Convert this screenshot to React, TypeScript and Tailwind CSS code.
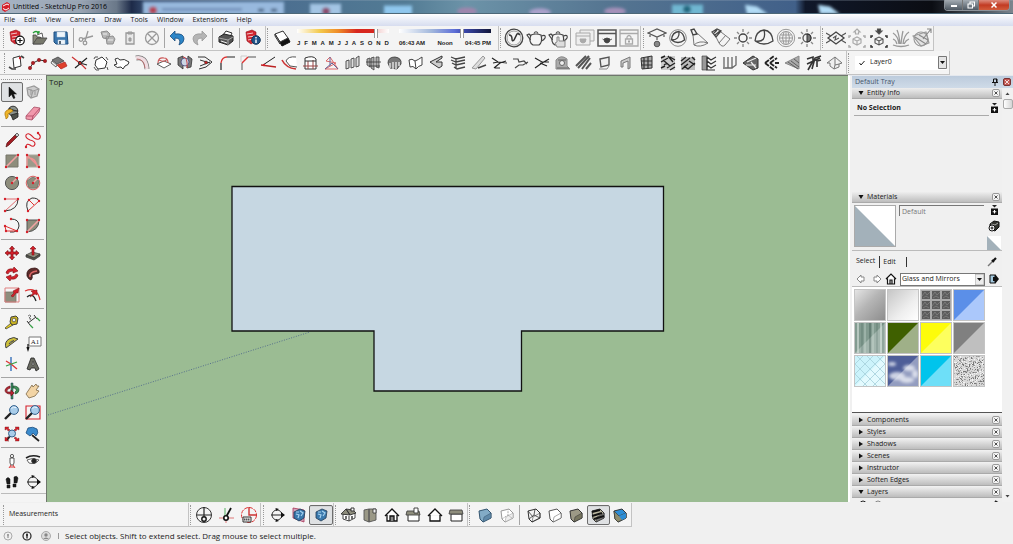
import type { ReactNode } from "react";

type Tool = { label: string; icon: ReactNode; pressed?: boolean };

function tool(label: string, icon: ReactNode, pressed = false): Tool {
  return { label, icon, pressed };
}

function Svg({ children }: { children: ReactNode }) {
  return (
    <svg viewBox="0 0 20 20" className="h-5 w-5 shrink-0" fill="none" stroke="#333" strokeWidth="1" aria-hidden="true">
      {children}
    </svg>
  );
}

function ToolButton({ item }: { item: Tool }) {
  return (
    <button
      type="button"
      aria-label={item.label}
      aria-pressed={item.pressed}
      className={
        item.pressed
          ? "flex h-5 min-w-0 flex-1 items-center justify-center rounded-xs border border-[#6d6d6d] bg-[#dfe1e3] inset-shadow-2xs"
          : "flex h-5 min-w-0 flex-1 items-center justify-center"
      }
    >
      {item.icon}
    </button>
  );
}

function Grip() {
  return <div className="mx-px h-5 w-0 shrink-0 border-l border-dotted border-[#999]" />;
}

function Sep() {
  return <div className="h-5 w-px shrink-0 bg-[#a5a5a5]" />;
}

function Group({ items, width }: { items: Tool[]; width: string }) {
  return (
    <div className={`flex shrink-0 items-center ${width}`}>
      {items.map((item) => (
        <ToolButton key={item.label} item={item} />
      ))}
    </div>
  );
}

/* ---------- shared glyphs ---------- */

const redBook = (
  <>
    <path d="M3 4 L9 2 L13 4 L13 13 L8 16 L4 13 Z" fill="#d22630" stroke="#8f1017" strokeWidth=".6" />
    <path d="M4 6 l6-1 M5 9 l7-1 M5 12 l5-1" stroke="#f3c4c6" strokeWidth="1" />
  </>
);

const magnifier = (
  <>
    <path d="M9 11 L3 17" stroke="#222" strokeWidth="2.4" />
    <circle cx="12" cy="8" r="4.4" fill="#a9cdea" stroke="#34618c" />
    <path d="M9.5 6.5 q2-2.5 4.5-.8" stroke="#eef7ff" />
  </>
);

const houseFront = (
  <path d="M3 11 L10 4 L17 11 M5 10 V16 H15 V10" stroke="#111" strokeWidth="1.3" fill="#fff" />
);

const pot = <path d="M7 10 q3-2 6 0 q0 4-3 4 q-3 0-3-4 M13 11 l2-1 M7 11 l-1.5-1" fill="#444" stroke="#444" strokeWidth=".8" />;

const teapot = (
  <>
    <path d="M5 7 Q2 14 7 17 H13 Q17 14 15 7 Q10 5 5 7 Z" stroke="#444" strokeWidth="1.2" />
    <path d="M4.5 12 L1 7 L3 6 L5 8 M15.5 8 Q20 6 19 10 Q18 12 15.5 13 M8 5.5 Q10 2 12 5.5" stroke="#444" strokeWidth="1.2" />
  </>
);

const prism = (fill: string, side: string, stroke = "#333") => (
  <>
    <path d="M4 6 L12 4 L16 8 L16 13 L8 17 L5 14 Z" fill={fill} stroke={stroke} />
    <path d="M8 17 L9 12 L16 8 V13 Z" fill={side} stroke={stroke} strokeWidth=".5" />
  </>
);

const sectionPlane = (
  <>
    <circle cx="10" cy="10" r="5" stroke="#333" />
    <path d="M4 10 H17" stroke="#222" />
    <path d="M14 7 L18 10 L14 13 Z M8.5 3 L12 4 L9 6 Z M8.5 17 L12 16 L9 14 Z" fill="#111" stroke="none" />
  </>
);

/* ---------- top toolbars ---------- */

const fileTools = [
  tool("New", <Svg>{redBook}<circle cx="13" cy="12.5" r="4.3" fill="#fff" stroke="#111" strokeWidth="1.2" /><path d="M13 10 V15 M10.5 12.5 H15.5" stroke="#111" strokeWidth="1.2" /></Svg>),
  tool("Open", <Svg><path d="M4 7 V16 H12 V9 H8 L7 7 Z" fill="#8b8b7b" stroke="#444" strokeWidth=".8" /><path d="M8 7 L13 5 L14 10" fill="#fff" strokeWidth=".8" /><path d="M4 16 L8 10 H18 L14 16 Z" fill="#77786c" stroke="#444" strokeWidth=".8" /><path d="M4 5 q3-3 6 0 M10 5 l-2 0 M10 5 V3" stroke="#249c34" strokeWidth="1.3" /></Svg>),
  tool("Save", <Svg><path d="M3 4 H16 L17 16 H5 L3 14 Z" fill="#3a76ad" stroke="#1e4f80" /><path d="M6 4 H14 V9 H6 Z M7 12 H14 V16 H7 Z" fill="#eef5fb" stroke="#bfd0df" strokeWidth=".5" /><path d="M9 13 v3" stroke="#234" strokeWidth="1.5" /></Svg>),
];

const editTools = [
  tool("Cut", <Svg><g stroke="#9a9a9a" strokeWidth="1.3"><path d="M12 3 L9 13 M17 8 L6 11" /><circle cx="5" cy="11.5" r="1.8" /><circle cx="9" cy="15" r="1.8" /></g></Svg>),
  tool("Copy", <Svg><path d="M3 4 L9 3 L12 6 L10 11 L5 10 Z M8 9 L15 8 L17 11 L15 16 L9 16 Z" fill="#b7b7b7" stroke="#8e8e8e" /><path d="M5 6 h4 M10 12 h5" stroke="#eee" /></Svg>),
  tool("Paste", <Svg><path d="M6 5 H14 V16 H6 Z" fill="#e8e8e8" stroke="#999" strokeWidth="1.3" /><path d="M8 4 H12 V6 H8 Z M9 10 h2 v3 h-2 Z" fill="#aaa" stroke="#999" /></Svg>),
  tool("Erase", <Svg><circle cx="10" cy="10" r="6.5" stroke="#999" strokeWidth="1.3" /><path d="M5.5 5.5 L14.5 14.5 M14.5 5.5 L5.5 14.5" stroke="#999" strokeWidth="1.3" /></Svg>),
];

const undoTools = [
  tool("Undo", <Svg><path d="M3 8 L8 3 V6 Q17 5 17 11 Q17 15 12 17 Q15 10 8 10 V13 Z" fill="#2d86c8" stroke="#1c4d7c" strokeWidth=".8" /></Svg>),
  tool("Redo", <Svg><path d="M17 8 L12 3 V6 Q3 5 3 11 Q3 15 8 17 Q5 10 12 10 V13 Z" fill="#b5b5b5" stroke="#999" strokeWidth=".8" /></Svg>),
];

const printTools = [
  tool("Print", <Svg><path d="M7 7 L10 3 L16 5 L14 9 Z" fill="#fff" /><path d="M3 9 L8 6 L17 8 V13 L12 17 L3 14 Z" fill="#555" stroke="#222" /><path d="M3 10 L12 12 L17 9 M12 12 V17" stroke="#bbb" strokeWidth=".8" /><path d="M5 13 l6 2" stroke="#eee" /></Svg>),
];

const infoTools = [
  tool("Model Info", <Svg>{redBook}<circle cx="13" cy="12" r="4.3" fill="#20548a" stroke="#113355" /><path d="M13 11.5 V15 M13 9 V10.5" stroke="#fff" strokeWidth="1.4" /></Svg>),
];

const shadowTools = [
  tool("Show Shadows", <Svg><path d="M7 13 L16 10 L18 14 L10 18 Z" fill="#111" stroke="#111" /><path d="M3 6 L11 3 L16 10 L8 14 Z" fill="#fff" /><path d="M3 6 L8 14 L8 16 L3 8 Z" fill="#ccc" /></Svg>),
];

const renderTools = [
  tool("Asset Editor", <Svg><circle cx="10" cy="10" r="8.8" stroke="#444" strokeWidth="1.3" /><circle cx="10" cy="10" r="7" stroke="#888" strokeWidth=".8" /><path d="M5 7 Q8 7 8 11 Q8 14 10 12 L13 6 Q14 5 16 7" strokeWidth="1.5" /></Svg>),
  tool("Render", <Svg>{teapot}</Svg>),
  tool("Interactive Render", <Svg>{teapot}<path d="M9 19 L7 15 L9 14 V9 h2 v4 h6 v6 Z" fill="#ddd" stroke="#888" /></Svg>),
];

const frameTools = [
  tool("Batch Render", <Svg><g stroke="#aaa"><path d="M5 2 H19 V13 H5 Z" fill="#eee" /><path d="M1 5 H15 V17 H1 Z M1 8 H15" fill="#eee" /><path d="M5 11 h6 q0 4-3 4 q-3 0-3-4" fill="#aaa" /></g></Svg>),
  tool("Frame Buffer", <Svg><g strokeWidth="1.5" stroke="#555"><path d="M1 2 H19 V18 H1 Z M1 5.5 H19" /></g><g transform="translate(0 1)">{pot}</g></Svg>),
  tool("Lock Camera", <Svg><g stroke="#aaa" strokeWidth="1.3"><path d="M1 2 H19 V18 H1 Z M1 5.5 H19 M6.5 11 H13.5 V16 H6.5 Z M8 11 V9 Q10 6 12 9 V11" /></g><path d="M10 12.5 v2" stroke="#888" strokeWidth="1.5" /></Svg>),
];

const lightTools = [
  tool("Plane Light", <Svg><path d="M1 5 L10 1 L19 5 L10 9 Z M3 5 v4 M17 5 v4 M10 9 v3" strokeWidth="1.2" stroke="#555" /><circle cx="10" cy="16" r="2.8" fill="#888" stroke="#555" /></Svg>),
  tool("Sphere Light", <Svg><circle cx="10" cy="10" r="8.3" stroke="#888" /><path d="M3.5 12 Q4 4 11 3.5 Q16 5 16.5 12 Q10 17 3.5 12 M3.5 12 Q12 12 11 3.5" strokeWidth="1.3" stroke="#444" /></Svg>),
  tool("Spot Light", <Svg><path d="M1 2 l3-1 3 5 -4 1 Z" stroke="#444" strokeWidth="1.4" /><path d="M3 7 L4 17 Q10 20 18 15 L7 5 M4 17 Q9 12 18 15" stroke="#777" /></Svg>),
  tool("IES Light", <Svg><path d="M1 4 l5-3 4 2 -5 6 Z M3 5 l3-3 M4 7 l5-4" stroke="#444" strokeWidth="1.3" /><path d="M5 9 L8 15 Q11 20 14 17 L19 11 L10 4 M8 15 L15 7" stroke="#777" /></Svg>),
  tool("Omni Light", <Svg><circle cx="10" cy="10" r="4" stroke="#444" strokeWidth="1.4" /><path d="M10 1 V4 M10 16 V19 M1 10 H4 M16 10 H19 M4 4 L6 6 M14 14 L16 16 M16 4 L14 6 M4 16 L6 14" stroke="#888" strokeWidth="1.3" /></Svg>),
  tool("Dome Light", <Svg><path d="M1 13 Q2 3 10 2 Q18 3 19 13 Q10 19 1 13 M1 13 Q13 15 10 2" stroke="#444" strokeWidth="1.3" /></Svg>),
  tool("Globe", <Svg><g stroke="#999"><circle cx="10" cy="10" r="8.7" /><circle cx="10" cy="10" r="6.5" /><path d="M3.5 10 H16.5 M10 3 V17 M4.5 7 H15.5 M4.5 13 H15.5 M8 4 Q5 10 8 16 M12 4 Q15 10 12 16" /></g></Svg>),
  tool("Sun", <Svg><circle cx="10" cy="10" r="4" stroke="#555" strokeWidth="1.3" /><path d="M10 6 a4 4 0 0 1 0 8 Z" fill="#777" /><path d="M10 1 V4 M10 16 V19 M1 10 H4 M16 10 H19 M4 4 L6 6 M14 14 L16 16 M16 4 L14 6 M4 16 L6 14" stroke="#888" strokeWidth="1.3" /></Svg>),
];

const proxyTools = [
  tool("Infinite Plane", <Svg><path d="M2 10 L10 4 L18 10 L10 16 Z" stroke="#444" strokeWidth="1.3" /><path d="M0 5 L5 8 M20 5 L15 8 M0 15 L5 12 M20 15 L15 12 M7 10 L10 8 L9 12 L13 10" stroke="#555" strokeWidth="1.1" /></Svg>),
  tool("Export Proxy", <Svg><g stroke="#aaa" strokeWidth="1.2"><path d="M10 1 L13 4 H11.5 V6 H8.5 V4 H7 Z M6 11 L10 9 L14 11 V15 L10 17 L6 15 Z M6 11 L10 13 L14 11 M10 13 V17" /><path d="M2 10 V8 H4 M18 10 V8 H16 M2 17 V19 H4 M18 17 V19 H16" strokeWidth="1.5" /></g></Svg>),
  tool("Import Proxy", <Svg><g stroke="#555" strokeWidth="1.1"><path d="M10 6 L13 3 H11.5 V1 H8.5 V3 H7 Z" fill="#444" /><path d="M6 11 L10 9 L14 11 V15 L10 17 L6 15 Z M6 11 L10 13 L14 11 M10 13 V17" /><path d="M2 10 V8 H4 M18 10 V8 H16 M2 17 V19 H4 M18 17 V19 H16" stroke="#333" strokeWidth="1.5" /></g></Svg>),
  tool("Fur", <Svg><g stroke="#999" strokeWidth="1.3"><path d="M8 16 Q7 8 2 5 M9 16 Q8 6 6 2 M10 16 Q11 7 12 3 M12 16 Q13 7 18 4 M13 16 Q15 12 18 11 M6 16 Q5 12 2 11" /><path d="M2 17 Q10 20 18 17" /></g></Svg>),
  tool("Clipper", <Svg><g stroke="#999" strokeWidth="1.1"><path d="M1 8 L14 4 L17 15 L9 18 Z" fill="#e2e2e2" /><circle cx="9" cy="11" r="7" /><path d="M3 9 L14 16 M7 7 L16 12 M11 11 L19 1 M15 1 H19 V5" stroke="#888" /></g></Svg>),
];

const dots = (pts: number[][]) =>
  pts.map(([x, y]) => <circle key={`${x}-${y}`} cx={x} cy={y} r="1.2" fill="#d4202a" stroke="none" />);

const nodes = (pts: number[][]) =>
  pts.map(([x, y]) => <circle key={`${x}-${y}`} cx={x} cy={y} r="1.7" fill="#b01c22" stroke="#7a1015" strokeWidth=".5" />);

const shapeTools = [
  tool("Face From Lines", <Svg><path d="M6 5 L13 3 L14 13 L7 15 Z" fill="#fff" /><path d="M2 14 L5 16 H9 M14 3 L17 5" stroke="#444" strokeWidth="1.6" />{dots([[13, 5]])}</Svg>),
  tool("Bezier Nodes", <Svg><path d="M2 15 L5 10 L11 7 L18 8" stroke="#333" />{nodes([[2, 15], [5, 10], [11, 7], [17, 8]])}</Svg>),
  tool("Push Face", <Svg><path d="M3 7 L9 4 L15 8 L8 11 Z" fill="#777" strokeWidth=".7" /><path d="M3 8 L8 12 L7 14 L2 10 Z" fill="#eee" strokeWidth=".7" /><path d="M8 12 L16 9 L18 13 L12 16 Z" fill="#e0402b" stroke="#a22" strokeWidth=".7" /></Svg>),
  tool("Trim", <Svg><path d="M2 4 L11 11 L16 16" stroke="#c33" strokeWidth="1.2" /><path d="M5 15 L17 5 M10 10 L17 12" stroke="#222" strokeWidth="1.2" /><circle cx="10" cy="10" r="1.6" fill="#c22" /></Svg>),
  tool("Polyhedron", <Svg><path d="M5 7 L11 4 L16 9 L14 15 L7 16 L4 12 Z" fill="#fff" /><path d="M3 6 L4 4 L7 4 M15 4 L17 7 M3 14 L5 17 H8 M16 14 L17 17" stroke="#555" /></Svg>),
  tool("Surface Patch", <Svg><path d="M3 6 Q6 4 8 7 Q12 5 17 9 Q17 12 13 13 L11 16 L9 14 Q5 16 2 12 L5 11 Z" fill="#fff" stroke="#333" /></Svg>),
  tool("Pipe Along Path", <Svg><path d="M3 5 Q13 3 14 16" stroke="#777" strokeWidth="5" /><path d="M3 5 Q13 3 14 16" stroke="#f0dde2" strokeWidth="3.4" /><path d="M4 6 Q11 6 12 15" stroke="#b66" strokeWidth=".8" /></Svg>),
  tool("Dome Patch", <Svg><path d="M3 11 L10 8 L17 11 L10 15 Z" fill="#fff" strokeWidth=".8" /><path d="M4 10 Q4 4 10 5 Q14 5 14 10 M5 7 Q11 10 13 6" stroke="#c55" strokeWidth="1.1" /></Svg>),
  tool("Shell", <Svg><path d="M3 5 L8 3 L8 16 L3 12 Z M13 3 L17 6 L16 14 L12 15 Z" fill="#777" strokeWidth=".8" /><circle cx="10" cy="9" r="4" fill="#ccd7e6" stroke="#447" strokeWidth=".8" /><path d="M8 4 Q13 4 12 15" stroke="#c44" /></Svg>),
  tool("Split Face", <Svg><path d="M2 4 L9 4 L16 9 L10 14 L3 16 M4 7 L14 10 M4 13 L14 9" stroke="#333" /><circle cx="10" cy="9.5" r="1.5" fill="#c22" strokeWidth=".5" /></Svg>),
  tool("Round Corner", <Svg><path d="M4 10 Q5 4 10 4" stroke="#d33" strokeWidth="1.3" /><path d="M4 17 V10 M10 4 H18" stroke="#222" strokeWidth="1.2" /></Svg>),
  tool("Chamfer", <Svg><path d="M4 17 V10 M10 4 H18" stroke="#555" /><path d="M4 10 L10 4" stroke="#d33" strokeWidth="1.5" /><path d="M3 9 V3 H9" stroke="#ccc" /></Svg>),
  tool("Angle Split", <Svg><path d="M2 12 L17 14" stroke="#b22" strokeWidth="1.3" /><path d="M4 12 L16 4" stroke="#222" />{dots([[5, 12]])}</Svg>),
  tool("Arc Sweep", <Svg><path d="M16 4 Q8 3 6 8 L10 13 L17 14" fill="#fff" stroke="#555" /><path d="M2 7 Q6 15 16 16" stroke="#c33" strokeWidth="1.6" /></Svg>),
  tool("Bend Surface", <Svg><path d="M4 5 Q12 2 15 6 V16 H4 Z" fill="#fff" stroke="#333" /><path d="M2 13 H17 M7 8 V16 M12 7 V16" stroke="#944" /><path d="M4 8 H15" stroke="#333" /></Svg>),
  tool("Triangulate", <Svg><path d="M4 8 L8 4 L16 16 H3 L14 10 Z" stroke="#d66" /><path d="M3 16 L10 10 L16 16 M8 4 V13" stroke="#669" /></Svg>),
  tool("Ribbon", <Svg><path d="M3 8 L6 7 V15 L3 16 Z M8 6 L11 5 V14 L8 15 Z M13 5 L16 3 V13 L13 14 Z" fill="#ddd" stroke="#444" strokeWidth=".9" /></Svg>),
  tool("Fins", <Svg><path d="M3 6 L6 5 V14 L3 12 Z M7 5 L10 4 V17 L7 15 Z M12 4 L15 4 V15 L12 14 Z" fill="#aaa" stroke="#444" strokeWidth=".8" /><path d="M2 9 H17 M5 13 H16" strokeWidth=".8" /></Svg>),
  tool("Vault", <Svg><path d="M3 10 Q3 4 10 4 Q17 5 16 11 L12 16 L5 15 Z" fill="#777" strokeWidth=".8" /><path d="M5 10 V15 M8 9 V16 M11 9 V16 M14 9 V13" stroke="#eee" strokeWidth="1.3" /></Svg>),
  tool("Curved Sheet", <Svg><path d="M3 7 Q6 5 9 8 Q12 7 16 4 L16 12 Q12 13 10 16 Q7 12 4 14 Z M9 8 L10 16" fill="#fff" stroke="#444" /></Svg>),
  tool("Arrow Sheet", <Svg><path d="M15 3 L3 9 L12 15 L15 13 V9 L9 9 L15 5 Z" fill="#ccc" stroke="#333" /></Svg>),
  tool("Layers Sheet", <Svg><path d="M3 4 L8 6 L17 4 M3 7 L8 9 L17 7 M4 10 L8 12 L17 10 M6 14 L9 16 L17 14 M8 5 V16" stroke="#444" strokeWidth="1.3" /></Svg>),
  tool("Ramp", <Svg><path d="M3 15 L14 3 L16 5 L7 16 Z" fill="#ddd" stroke="#999" /><path d="M9 15 L17 12" stroke="#444" strokeWidth="1.4" /></Svg>),
  tool("Rail", <Svg><path d="M2 5 L8 9 L17 10 M3 10 L8 9 M4 15 L10 10 L16 8 M5 15 H10" stroke="#222" strokeWidth="1.2" /></Svg>),
  tool("Stairs", <Svg><path d="M2 6 L7 6 L8 9 L13 8 L16 11 M4 15 L8 12 L12 12 L17 9" stroke="#444" strokeWidth="1.2" /></Svg>),
  tool("Cross Rail", <Svg><path d="M3 5 L10 9 H17 M3 15 L10 10 L17 6 M8 10 L15 13" stroke="#222" strokeWidth="1.2" /></Svg>),
  tool("Arch", <Svg><path d="M3 16 V7 Q8 1 14 6 V13 L17 16 Z" fill="#aaa" stroke="#888" /><circle cx="9" cy="10" r="2.5" fill="#eee" stroke="#666" /><path d="M4 15 h12 M5 7 h8" stroke="#666" /></Svg>),
  tool("Roof Slats", <Svg><path d="M2 13 L12 3 M4 15 L15 3 M8 16 L16 5 M12 16 L17 10" stroke="#555" strokeWidth="2" /></Svg>),
  tool("Window", <Svg><path d="M5 6 L14 4 V12 L6 14 Z" fill="#eee" stroke="#555" strokeWidth="1.4" /><path d="M4 16 L12 16 L14 13" stroke="#888" /></Svg>),
  tool("Door Frame", <Svg><path d="M5 14 V8 L14 4 V15 L12 16 V8 L7 10 V14 Z" fill="#ccc" stroke="#777" /></Svg>),
  tool("Grid Wall", <Svg><path d="M4 5 L15 3 V15 L5 16 Z" fill="#aaa" /><path d="M7 5 V16 M11 4 V16 M4 8 H15 M4 12 H15" stroke="#333" strokeWidth="1.2" /></Svg>),
  tool("Weave", <Svg><path d="M3 3 H17 V17 H3 Z" fill="#ccc" stroke="none" /><path d="M3 5 L7 3 M3 9 L10 5 M6 12 L9 10 M3 15 L7 13 M9 15 L17 10 M12 4 L17 7 M5 7 L12 13 M10 3 L15 9 M12 17 L17 14" stroke="#222" strokeWidth="1.4" /></Svg>),
  tool("Parquet", <Svg><path d="M3 4 H17 V17 H3 Z" fill="#bbb" stroke="none" /><path d="M3 8 L8 4 M3 12 L12 5 M4 16 L10 11 M10 16 L17 10 M11 8 L17 12 M14 4 L17 7 M6 13 L10 16" stroke="#222" strokeWidth="1.4" /></Svg>),
  tool("Herringbone", <Svg><path d="M3 3 H8 V17 H3 Z" fill="#999" strokeWidth=".6" /><path d="M8 4 L12 7 L17 4 M8 8 L12 11 L17 8 M8 12 L12 15 L17 12 M8 4 V17 H16" strokeWidth="1.2" /></Svg>),
  tool("Planks", <Svg><path d="M4 4 V14 M8 4 V15 H12 V4 M16 3 V12 L12 15 M3 15 H12" stroke="#666" strokeWidth="1.3" /></Svg>),
  tool("Shingles", <Svg><path d="M2 10 L12 3 L17 6 V15 L12 17 Z" fill="#666" /><path d="M6 9 L15 5 M5 12 L15 12 M10 9 L15 15" stroke="#eee" strokeWidth="1.2" /></Svg>),
  tool("Chevron", <Svg><path d="M3 10 L12 3 M3 10 L12 17 M8 10 L15 5 M8 10 L15 15 M13 10 h4" stroke="#222" strokeWidth="1.8" strokeDasharray="5 1" /></Svg>),
  tool("Slat Ramp", <Svg><path d="M2 10 L16 3 V16 Z" fill="#aaa" stroke="#888" /><path d="M5 9 L15 16 M8 8 L16 14 M11 6 L16 10" stroke="#555" strokeWidth=".9" /></Svg>),
  tool("Louvers", <Svg><path d="M3 6 L9 4 L9 8 L4 17 M8 16 L11 5 L17 3 M13 14 V8 L17 7 M3 11 L16 5" stroke="#333" strokeWidth="1.6" /></Svg>),
  tool("House Outline", <Svg><path d="M2 10 L10 4 L17 10 L14 11 V14 L9 16 L5 13 V10 Z M10 4 V12 L14 11 M10 12 L9 16" fill="#eee" stroke="#777" /></Svg>),
];

/* ---------- left toolbar ---------- */

const R = "#d4202a";

const leftGroups: { height: string; items: Tool[] }[] = [
  {
    height: "h-[43px]",
    items: [
      tool("Select", <Svg><path d="M7 5 V15 L9.5 12.5 L11.5 16.5 L13 16 L11.5 12 H14.5 Z" fill="#111" stroke="#111" strokeWidth=".5" /></Svg>, true),
      tool("Make Component", <Svg><path d="M4 6 L11 4 L16 7 L14 14 L8 16 L5 13 Z" fill="#ccc" stroke="#999" strokeWidth="1.2" /><path d="M5 7 L10 9 L16 7 M10 9 L8 16 M8 7 v6 M12 9 v4" stroke="#999" /></Svg>),
      tool("Paint Bucket", <Svg><circle cx="11" cy="8" r="4.8" fill="#8b928c" stroke="#333" /><path d="M7 5 Q11 9 16 8 M9 12 l7-2 v4 l-5 3 Z" fill="#4d514b" stroke="#222" strokeWidth=".8" /><path d="M9 6 Q2 7 3 12 Q4 14 4 16 Q7 15 6 11 L11 8 Z" fill="#efb52b" stroke="#a77205" strokeWidth=".7" /></Svg>),
      tool("Eraser", <Svg><path d="M3 13 L11 4 L17 5 L16 9 L9 17 L3 16 Z" fill="#f199ac" stroke="#a44e64" strokeWidth=".8" /><path d="M3 13 L10 13 L17 5 M10 13 L9 17" stroke="#b9546e" /></Svg>),
    ],
  },
  {
    height: "h-[108px]",
    items: [
      tool("Line", <Svg><path d="M4 17 L5 13 L14 4 L16 6 L7 15 Z" fill="#a31d24" stroke="#511" strokeWidth=".7" /><path d="M13 5 L15 3 L17 5 L15 7 Z" fill="#ccc" strokeWidth=".7" /></Svg>),
      tool("Freehand", <Svg><path d="M3 16 Q4 13 7 15 Q11 18 12 14 Q12 11 7 10 Q2 8 3 5 Q5 2 9 6 Q12 10 16 9 Q19 7 15 3" stroke={R} strokeWidth="1.1" />{dots([[3, 17], [15, 3]])}</Svg>),
      tool("Rectangle", <Svg><path d="M4 4 H16 V16 H4 Z" fill="#8e8d7c" stroke="#77766a" /><path d="M4 16 L16 4" stroke="#f2a4a4" strokeWidth="1.6" />{dots([[4, 16], [16, 4]])}</Svg>),
      tool("Rotated Rectangle", <Svg><path d="M4 4 H16 V16 H4 Z" fill="#9b9a8a" stroke="#aaa99c" /><path d="M4 16 V4 M4 7 Q13 6 14 16 M4 4 L16 16" stroke="#ee9292" strokeWidth="1.3" />{dots([[4, 4], [4, 16], [16, 16], [16, 4]])}</Svg>),
      tool("Circle", <Svg><circle cx="10" cy="10" r="6.6" fill="#8e8d7c" stroke="#555" /><path d="M10 10 L15 5" stroke="#f2a4a4" strokeWidth="1.5" />{dots([[10, 10], [15, 5]])}</Svg>),
      tool("Polygon", <Svg><path d="M4 8 L10 4 L16 8 L14 15 L6 15 Z" fill="#8e8d7c" stroke="#666" /><circle cx="10" cy="10" r="6.8" stroke="#d66" fill="#8e8d7c" fillOpacity=".5" /><path d="M10 10 L15 5" stroke="#f2a4a4" strokeWidth="1.5" />{dots([[10, 10], [15, 5]])}</Svg>),
      tool("Arc", <Svg><path d="M3 16 Q16 15 16 4" stroke="#333" /><path d="M3 4 H16 L3 16" stroke="#df6b6f" />{dots([[3, 4], [16, 4], [3, 16]])}</Svg>),
      tool("Two Point Arc", <Svg><path d="M5 16 Q1 6 9 3 Q15 3 16 6" stroke="#333" /><path d="M5 16 L16 6 M6 5 L11 10" stroke="#d33" />{dots([[5, 16], [16, 6], [6, 5]])}</Svg>),
      tool("Three Point Arc", <Svg><path d="M9 3 Q17 3 17 10 Q16 17 8 16" stroke="#333" /><path d="M3 10 L15 15 H4 Z" stroke="#d33" />{dots([[3, 10], [9, 3], [4, 15], [15, 15]])}</Svg>),
      tool("Pie", <Svg><path d="M4 4 H16 Q16 15 4 16 Z" fill="#8e8d7c" stroke="#555" /><path d="M4 16 L16 4" stroke="#f2a4a4" strokeWidth="1.6" />{dots([[4, 4], [16, 4], [4, 16]])}</Svg>),
    ],
  },
  {
    height: "h-16",
    items: [
      tool("Move", <Svg><path d="M10 3 L12.5 6 H11 V9 H14 V7.5 L17 10 L14 12.5 V11 H11 V14 H12.5 L10 17 L7.5 14 H9 V11 H6 V12.5 L3 10 L6 7.5 V9 H9 V6 H7.5 Z" fill={R} stroke="#7a1015" strokeWidth=".7" /></Svg>),
      tool("Push/Pull", <Svg><path d="M3 12 L9 9 L17 11 L11 15 Z" fill="#8e8d7c" strokeWidth=".7" /><path d="M3 12 V14 L11 17 L17 13 V11 L11 15 Z" fill="#55554b" strokeWidth=".7" /><path d="M9 12 V6 H7 L10 3 L13 6 H11 V12 Z" fill={R} stroke="#7a1015" strokeWidth=".6" /></Svg>),
      tool("Rotate", <Svg><path d="M4 9 Q5 4 11 5 L12 3 L16 7 L11 9 V7 Q7 7 6 10 Z M16 11 Q15 16 9 15 L8 17 L4 13 L9 11 V13 Q13 13 14 10 Z" fill={R} stroke="#7a1015" strokeWidth=".6" /></Svg>),
      tool("Follow Me", <Svg><path d="M4 12 Q3 4 12 4 Q17 5 16 9 L12 10 L9 11 Q10 14 8 16 Q5 15 4 12 Z" fill="#5a2b2a" stroke="#311" strokeWidth=".8" /><path d="M7 13 Q6 8 14 7" stroke="#d66" strokeWidth="1.6" /></Svg>),
      tool("Scale", <Svg><path d="M3 7 H14 V17 H3 Z" fill="#8e8d7c" stroke="#77766a" strokeWidth=".8" /><path d="M3 3 H17 V17 H3 Z" stroke="#e08080" /><path d="M9 11 L12 8 L11 6 L17 3 L16 8 L14 8 L11 12 Z" fill={R} stroke="#7a1015" strokeWidth=".5" /></Svg>),
      tool("Offset", <Svg><path d="M2 6 Q14 1 17 15" stroke="#d33" strokeWidth="1.2" /><path d="M4 12 Q10 7 13 16" stroke="#222" strokeWidth="1.3" /><path d="M7 12 L10 8 L8 6 L14 5 L14 10 L12 9 Z" fill={R} stroke="#7a1015" strokeWidth=".5" /></Svg>),
    ],
  },
  {
    height: "h-16",
    items: [
      tool("Tape Measure", <Svg><path d="M3 16 L9 11 L11 13 L4 17 Z" fill="#ecd31f" stroke="#333" strokeWidth=".7" /><path d="M9 5 L14 4 L16 6 L15 12 L10 13 L8 10 Z" fill="#c9b321" stroke="#333" strokeWidth=".9" /><circle cx="12" cy="8" r="1.8" fill="#eee" strokeWidth=".6" /></Svg>),
      tool("Dimensions", <Svg><path d="M5 11 L13 5 M4 9 L7 13 M11 3 L14 7" stroke="#333" /><path d="M7 13 L10 16 M14 6 L17 9" stroke="#38a047" strokeWidth="1.3" /><path d="M5 4 q2-2 3 0 l-2 2 q3 0 1 2" stroke="#555" strokeWidth=".8" /></Svg>),
      tool("Protractor", <Svg><path d="M4 15 Q2 9 7 6 Q12 3 16 6 Z" fill="#ccbf3a" stroke="#444" /><path d="M7 11 Q8 8 12 7.5 Z" fill="#f1f1f1" stroke="#444" strokeWidth=".8" /></Svg>),
      tool("Text", <Svg><path d="M6 4 H18 V13 H6 Z" fill="#fff" stroke="#777" /><path d="M5 11 V17 M4 14 L5 17 L6 14" stroke="#111" strokeWidth="1.2" /><text x="12" y="11" textAnchor="middle" fontSize="7" fontFamily="Liberation Serif, serif" fill="#222" stroke="none">A1</text></Svg>),
      tool("Axes", <Svg><path d="M9 10 V3 M9 10 V17" stroke="#2a67b5" strokeWidth="1.3" /><path d="M9 10 L15 15 M4 7 L9 10" stroke="#d33" strokeWidth="1.3" /><path d="M4 12 L15 8" stroke="#38a047" strokeWidth="1.3" /></Svg>),
      tool("3D Text", <Svg><path d="M4 15 L8 4 H11 L16 15 L13 17 L12 14 H8 L7 16 Z" fill="#6a6b62" stroke="#222" strokeWidth=".8" /><path d="M9 11 L10 7 L11 11 Z" fill="#eee" strokeWidth=".6" /></Svg>),
    ],
  },
  {
    height: "h-[65px]",
    items: [
      tool("Orbit", <Svg><path d="M9 2 H11 V18 H9 Z" fill="#3f9159" stroke="#235" strokeWidth=".5" /><path d="M8 7 Q4 8 5 11 L9 11 V9 L12 12 L9 15 V13 Q3 13 3 9 Q4 6 8 5 Z" fill="#b82632" stroke="#6c151c" strokeWidth=".7" /><path d="M11 5 Q17 5 17 9 Q17 12 13 13 V11 Q15 10 14 8 Q13 7 11 7 Z" fill="#3f9159" stroke="#1c4f2e" strokeWidth=".7" /></Svg>),
      tool("Pan", <Svg><path d="M3 13 L7 7 L9 4 L10 6 L13 3 L14 5 L16 5 L13 9 L16 10 L12 15 L6 17 Z" fill="#f2d4a5" stroke="#7d6848" strokeWidth=".8" /></Svg>),
      tool("Zoom", <Svg>{magnifier}</Svg>),
      tool("Zoom Window", <Svg><path d="M3 4 H17 V17 H3 Z" stroke={R} strokeWidth="1.1" />{magnifier}</Svg>),
      tool("Zoom Extents", <Svg><path d="M8 12 L5 16" stroke="#222" strokeWidth="2" /><circle cx="10" cy="9.5" r="3.5" fill="#a9cdea" stroke="#34618c" /><path d="M3 3 h4 l-1 1 2 2 -2 1 -1-2 -2 1 Z M17 3 h-4 l1 1 -2 2 2 1 1-2 2 1 Z M17 17 h-4 l1-1 -2-2 2-1 1 2 2-1 Z M3 17 v-4 l1 1 2-1 -1 3 2 1 Z" fill={R} stroke="#7a1015" strokeWidth=".4" /></Svg>),
      tool("Previous View", <Svg><path d="M3 9 L5 4 Q10 2 14 5 Q16 9 13 12 L10 9 L7 12 Z" fill="#3b8bcd" stroke="#1c4d7c" strokeWidth=".8" /><path d="M9 11 L16 17" stroke="#222" strokeWidth="1.8" /></Svg>),
    ],
  },
  {
    height: "h-[43px]",
    items: [
      tool("Position Camera", <Svg><circle cx="10" cy="5" r="1.6" fill="#fff" strokeWidth=".8" /><path d="M8 7 H12 V12 L11 14 H9 L8 12 Z" fill="#fff" strokeWidth=".8" /><path d="M7 17 L9 14 M13 17 L11 14 M8 16 h4" stroke="#d33" /></Svg>),
      tool("Look Around", <Svg><path d="M4 9 Q9 6 16 9 Q12 14 6 12 Z" fill="#fff" stroke="#444" strokeWidth=".8" /><circle cx="11" cy="10" r="2.3" fill="#222" /><path d="M3 7 Q9 3 17 6" stroke="#222" strokeWidth="1.6" /></Svg>),
      tool("Walk", <Svg><path d="M4 7 Q6 4 8 7 L8 12 H5 Z M5 13 H8 V16 H5 Z M12 5 Q15 3 16 6 L15 11 H12 Z M11 12 L14 12 V15 L11 15 Z" fill="#1b1b1b" stroke="#111" strokeWidth=".5" /></Svg>),
      tool("Section Plane", <Svg>{sectionPlane}</Svg>),
    ],
  },
];

/* ---------- bottom toolbars ---------- */

const geoTools = [
  tool("Add Location", <Svg><circle cx="10" cy="10" r="7.5" /><path d="M3 10 H17 M10 2 V11" stroke="#222" strokeWidth="1.2" /><circle cx="10" cy="14" r="2.2" fill="#eee" stroke="#111" strokeWidth="1.4" /></Svg>),
  tool("Set North", <Svg><path d="M3 13 H18 M10 13 V18" stroke="#d77" /><path d="M9 3 V11" stroke="#56b163" /><path d="M10 12 L15 3" stroke="#111" strokeWidth="1.8" /><circle cx="10" cy="13" r="2.2" fill="#fff" stroke="#111" strokeWidth="1.6" /></Svg>),
  tool("North Angle", <Svg><circle cx="10" cy="10" r="7.5" stroke="#d33" strokeDasharray="4 1" /><path d="M10 2 V10 H18" stroke="#c33" strokeWidth="1.4" /><path d="M4 12 H12 V17 H4 Z" fill="#eee" /><path d="M5 14.5 h6" stroke="#555" strokeWidth="2" strokeDasharray="1.5 .5" /></Svg>),
];

const blueSection = (
  <>
    <path d="M5 7 L11 4 L16 6 L15 13 L10 16 L5 13 Z" fill="#3978ac" stroke="#223b55" strokeWidth=".8" />
    <path d="M7 9 l3 1 -1 3 M11 6 l3 2 -2 3 M7 7 l3 0" stroke="#a5d1ee" strokeWidth="1.2" />
  </>
);

const sectionTools = [
  tool("Section Cut", <Svg>{sectionPlane}</Svg>),
  tool("Display Section Planes", <Svg><path d="M4 3 L15 5 V17 L4 13 Z" fill="#d3a5bd" stroke="#a35" strokeWidth=".8" />{blueSection}</Svg>),
  tool("Display Section Cuts", <Svg>{blueSection}</Svg>, true),
];

const viewTools = [
  tool("Iso", <Svg><path d="M4 9 L11 9 L16 8 L16 13 L10 16 L4 14 Z" fill="#fff" stroke="#333" strokeWidth=".9" /><path d="M2 9 L7 4 L11 10 Z M7 4 L14 5 L17 8 L11 10 Z" fill="#8e8d7c" stroke="#333" strokeWidth=".9" /><path d="M12 3 h3 v3 h-3 Z M10 11 v5" fill="#fff" stroke="#333" /><path d="M7 11 v3 M13 11 v3" stroke="#333" strokeWidth="1.4" /></Svg>),
  tool("Top", <Svg><path d="M4 5 L9 4 V17 L4 15 Z M9 4 L16 4 V15 L9 17 Z" fill="#9a9886" stroke="#555" strokeWidth=".9" /><path d="M13 4 h3 v4 h-3 Z" fill="#eee" strokeWidth=".8" /></Svg>),
  tool("Front", <Svg>{houseFront}<path d="M8 16 V11 H12 V16" fill="#888" stroke="#111" strokeWidth="1.3" /></Svg>),
  tool("Right", <Svg><path d="M5 9 H16 V16 H5 Z" fill="#fff" stroke="#222" /><path d="M4 6 H16 L17 10 H3 Z" fill="#8e8d7c" stroke="#444" strokeWidth=".9" /><path d="M11 3 H15 V8 H11 Z" fill="#fff" strokeWidth=".9" /></Svg>),
  tool("Back", <Svg>{houseFront}</Svg>),
  tool("Left", <Svg><path d="M5 9 H16 V16 H5 Z" fill="#fff" stroke="#222" /><path d="M4 5 H16 L17 9 H3 Z" fill="#8e8d7c" stroke="#444" strokeWidth=".9" /></Svg>),
];

const xrayTools = [
  tool("X-Ray", <Svg>{prism("#83abc6", "#6089a8", "#34556f")}</Svg>),
  tool("Back Edges", <Svg>{prism("#fff", "#eee", "#999")}<path d="M5 14 L11 10 V4 M11 10 l5 4" stroke="#aaa" strokeDasharray="2 1" /></Svg>),
];

const styleTools = [
  tool("Wireframe", <Svg>{prism("none", "none")}<path d="M4 6 L9 12 M5 14 L10 10 L11 4 M10 10 L16 13" strokeWidth=".8" /></Svg>),
  tool("Hidden Line", <Svg>{prism("#fff", "#fff", "#555")}</Svg>),
  tool("Shaded", <Svg>{prism("#9c9986", "#77755f")}</Svg>),
  tool("Shaded With Textures", <Svg>{prism("#bbb7a0", "#777")}<path d="M4 7 L12 5 M4 11 L14 8 M6 14 L16 11" stroke="#111" strokeWidth="1.9" /></Svg>, true),
  tool("Monochrome", <Svg>{prism("#2e8ed6", "#2876b5")}<path d="M4 6 L9 11 L16 8 V13 L8 17 L5 14 Z" fill="#8f8d6e" strokeWidth=".6" /><path d="M9 11 L16 8 V13 L12 15 Z" fill="#2e8ed6" stroke="none" /></Svg>),
];

/* ---------- right tray ---------- */

function TrayHeader({ title, open = false }: { title: string; open?: boolean }) {
  return (
    <div className="flex h-[11px] shrink-0 items-center border-b border-[#aaa] bg-linear-to-b from-[#eee] to-[#bdbdbd] pr-0.5 pl-1.5">
      <button type="button" aria-expanded={open} className="flex flex-1 items-center gap-[3px] text-left text-[7px] leading-[10px]">
        <svg viewBox="0 0 6 6" className="h-1.5 w-1.5" aria-hidden="true">
          <path d={open ? "M.5 1 H5.5 L3 5 Z" : "M1 .5 L5 3 L1 5.5 Z"} fill="#111" />
        </svg>
        {title}
      </button>
      <button type="button" aria-label={`Close ${title}`} className="flex h-2 w-2 items-center justify-center rounded-xs border border-[#999] bg-[#f4f4f4]">
        <svg viewBox="0 0 4 4" className="h-1 w-1" stroke="#222" strokeWidth=".8" aria-hidden="true">
          <path d="M.5 .5 L3.5 3.5 M3.5 .5 L.5 3.5" />
        </svg>
      </button>
    </div>
  );
}

function ExpandButton({ label }: { label: string }) {
  return (
    <button type="button" aria-label={label} className="h-2.5 w-2.5">
      <svg viewBox="0 0 10 10" className="h-2.5 w-2.5" aria-hidden="true">
        <path d="M3 0 H8 L5.5 2.5 Z" fill="#222" />
        <path d="M2 3.5 H9 V10 H2 Z" fill="#111" />
        <path d="M5.5 5 V8.5 M3.7 6.7 H7.3" stroke="#fff" strokeWidth="1.1" />
      </svg>
    </button>
  );
}

const half = (a: string, b: string) => (
  <>
    <path d="M0 0 H30 V30 H0 Z" fill={b} />
    <path d="M0 0 H30 L0 30 Z" fill={a} />
  </>
);

// fixed pseudo random pattern, so that the speckle is the same on each render
const speckle = Array.from({ length: 420 }, (_, i) => ({
  x: (i * 37 + ((i * i) % 11)) % 30,
  y: (i * 17 + ((i * i * 3) % 13)) % 30,
  c: ["#777", "#999", "#aaa", "#f4f4f4"][(i * 7) % 4],
}));

const swatches: { name: string; art: ReactNode }[] = [
  { name: "Mirror 01", art: <path d="M0 0 H30 V30 H0 Z" fill="url(#mirror1)" /> },
  { name: "Mirror 02", art: <path d="M0 0 H30 V30 H0 Z" fill="url(#mirror2)" /> },
  {
    name: "Glass Block",
    art: (
      <>
        <path d="M0 0 H30 V30 H0 Z" fill="#aaa" />
        {[1, 11, 21].map((y) => [1, 11, 21].map((x) => (
          <g key={`${x}-${y}`}>
            <rect x={x} y={y} width="8" height="8" fill="#5b5b5b" />
            <path d={`M${x} ${y + 5} l3-4 2 3 3-3 M${x + 1} ${y + 7} l3-2 3 2`} stroke="#888" fill="none" strokeWidth=".7" />
          </g>
        )))}
      </>
    ),
  },
  { name: "Translucent Glass Blue", art: half("#5b8fe8", "#abc8fb") },
  {
    name: "Corrugated Glass",
    art: (
      <>
        {half("#829b90", "#93aaa0")}
        {[3, 7, 10, 15, 18, 22, 26, 28].map((x, i) => (
          <path key={x} d={`M${x} 0 V30`} stroke={i % 2 ? "#607a70" : "#c3d3cb"} strokeWidth={i % 3 === 0 ? 2 : 1} opacity=".8" />
        ))}
        <path d="M30 0 V30 H0 Z" fill="#fff" opacity=".15" />
      </>
    ),
  },
  { name: "Translucent Glass Green", art: half("#3f6000", "#9fb088") },
  { name: "Translucent Glass Yellow", art: half("#fdfc0a", "#fdff5e") },
  { name: "Translucent Glass Gray", art: half("#808080", "#bfbfbf") },
  {
    name: "Safety Glass",
    art: (
      <>
        {half("#ccf3fb", "#e3fafe")}
        <path d="M0 8 L8 0 M0 18 L18 0 M0 28 L28 0 M8 30 L30 8 M18 30 L30 18 M22 0 L30 8 M12 0 L30 18 M2 0 L30 28 M0 8 L22 30 M0 18 L12 30" stroke="#a5cfda" strokeWidth=".8" />
      </>
    ),
  },
  {
    name: "Sky Reflection",
    art: (
      <>
        {half("#4e5e98", "#6f7cab")}
        <g filter="url(#cloud)" fill="#cdd3e4">
          <ellipse cx="9" cy="20" rx="8" ry="4" />
          <ellipse cx="4" cy="8" rx="4" ry="2" />
          <ellipse cx="21" cy="12" rx="6" ry="3" />
          <ellipse cx="19" cy="24" rx="7" ry="3" />
          <ellipse cx="27" cy="18" rx="3" ry="4" />
        </g>
        <path d="M30 0 V30 H0 Z" fill="#fff" opacity=".25" />
      </>
    ),
  },
  { name: "Translucent Glass Cyan", art: half("#00c4ec", "#6edff8") },
  {
    name: "Frosted Glass",
    art: (
      <>
        <path d="M0 0 H30 V30 H0 Z" fill="#d8d8d8" />
        {speckle.map((s, i) => <rect key={i} x={s.x} y={s.y} width="1" height="1" fill={s.c} />)}
      </>
    ),
  },
];

function DefaultTray() {
  return (
    <aside className="flex w-[165px] shrink-0 flex-col overflow-hidden border-t border-l-2 border-t-[#e4e8ee] border-l-white bg-[#f0f0f0] pl-0.5">
      <div className="flex h-3 shrink-0 items-center bg-linear-to-b from-[#bccbdc] to-[#cfdbe8] pr-0.5 pl-[3px] text-[7px] leading-3 text-[#45566b]">
        <span className="flex-1">Default Tray</span>
        <button type="button" aria-label="Pin tray" className="mr-1 h-2 w-2">
          <svg viewBox="0 0 8 8" className="h-2 w-2" fill="none" stroke="#111" aria-hidden="true">
            <path d="M2.5 1 H6 V4.5 H2.5 Z M1 4.5 H7 M4 5 V8 M5.5 1 V4" />
          </svg>
        </button>
        <button type="button" aria-label="Close tray" className="flex h-2 w-2 items-center justify-center rounded-xs border border-[#733] bg-[#c55b55]">
          <svg viewBox="0 0 4 4" className="h-1 w-1" stroke="#fff" strokeWidth=".8" aria-hidden="true"><path d="M0 0 L4 4 M4 0 L0 4" /></svg>
        </button>
      </div>
      <div className="flex min-h-0 flex-1">
        <div className="flex min-w-0 flex-1 flex-col">
          <TrayHeader title="Entity Info" open />
          <section className="h-[93px] shrink-0 pr-[3px] pl-0.5">
            <div className="flex h-4 items-center justify-between pt-0.5 pl-[3px]">
              <h2 className="text-[7px] font-bold">No Selection</h2>
              <ExpandButton label="Show details" />
            </div>
            <div className="mr-2.5 h-px bg-[#aaa]" />
          </section>
          <TrayHeader title="Materials" open />
          <section className="flex shrink-0 flex-col">
            <div className="flex h-12 gap-[3px] border-b border-[#bbb] pt-0.5 pr-px pl-0.5">
              <svg viewBox="0 0 42 42" className="h-[42px] w-[42px] border border-[#aaa]" aria-label="Material preview">
                <path d="M0 0 H42 V42 H0 Z" fill="#fff" />
                <path d="M0 0 L42 42 H0 Z" fill="#a3b1ba" />
              </svg>
              <input
                aria-label="Material name"
                defaultValue="Default"
                className="h-[11px] min-w-0 flex-1 border-t border-l border-[#777] bg-[#f0f0f0] px-0.5 text-[7px] text-[#777] outline-none"
              />
              <div className="flex w-3.5 flex-col items-center justify-between">
                <ExpandButton label="Show secondary pane" />
                <button type="button" aria-label="Create material" className="h-3 w-3">
                  <svg viewBox="0 0 12 12" className="h-3 w-3" aria-hidden="true">
                    <path d="M2 4 L6 1 L11 2 V7 L7 11 L2 9 Z" fill="#33342f" stroke="#111" />
                    <path d="M3 4 L7 5 L10 3" stroke="#aaa" fill="none" />
                    <circle cx="4" cy="8" r="3" fill="#fff" stroke="#111" />
                    <path d="M4 6.5 V9.5 M2.5 8 H5.5" stroke="#111" />
                  </svg>
                </button>
                <svg viewBox="0 0 14 14" className="h-3.5 w-3.5" aria-hidden="true">
                  <path d="M0 0 H14 V14 H0 Z" fill="#fff" />
                  <path d="M0 0 L14 14 H0 Z" fill="#a3b1ba" />
                </svg>
              </div>
            </div>
            <div className="flex h-[21px] items-center pr-1 text-[7px]">
              <div role="tablist" className="flex flex-1 items-center">
                <button type="button" role="tab" aria-selected="true" className="border-r border-[#333] pr-1 pb-0.5 pl-1 leading-[10px]">Select</button>
                <button type="button" role="tab" aria-selected="false" className="border-r border-[#333] pr-2.5 pl-[3px] leading-[10px]">Edit</button>
              </div>
              <button type="button" aria-label="Sample paint" className="h-3 w-3">
                <svg viewBox="0 0 12 12" className="h-3 w-3" aria-hidden="true">
                  <path d="M2 10 L7 5" stroke="#777" strokeWidth="1.5" />
                  <path d="M6 4 L8 6 M7 5 L10 2" stroke="#111" strokeWidth="2.2" />
                </svg>
              </button>
            </div>
            <div className="flex h-[15px] items-center border-b border-[#bbb] pr-[3px] pl-1">
              <button type="button" aria-label="Back" className="mr-1.5 h-2.5 w-2.5">
                <svg viewBox="0 0 10 10" className="h-2.5 w-2.5" fill="#fff" stroke="#888" aria-hidden="true"><path d="M1 5 L5 1 V3 H8 V7 H5 V9 Z" /></svg>
              </button>
              <button type="button" aria-label="Forward" className="mr-[3px] h-2.5 w-2.5">
                <svg viewBox="0 0 10 10" className="h-2.5 w-2.5" fill="#fff" stroke="#888" aria-hidden="true"><path d="M9 5 L5 1 V3 H2 V7 H5 V9 Z" /></svg>
              </button>
              <button type="button" aria-label="In model" className="mr-[3px] h-3 w-3">
                <svg viewBox="0 0 12 12" className="h-3 w-3" fill="#fff" stroke="#111" aria-hidden="true"><path d="M1 6 L6 1 L11 6 M2.5 5.5 V11 H9.5 V5.5 M5 11 V7 H7 V11" strokeWidth="1.2" /></svg>
              </button>
              <span className="relative flex h-[13px] flex-1">
                <select aria-label="Material library" className="h-full w-full appearance-none border border-[#777] bg-white pl-px text-[7px] outline-none">
                  <option>Glass and Mirrors</option>
                </select>
                <svg viewBox="0 0 9 11" className="pointer-events-none absolute top-px right-px h-[11px] w-[9px]" aria-hidden="true">
                  <path d="M0 0 H9 V11 H0 Z" fill="#ececec" stroke="#aaa" />
                  <path d="M2 4 H7 L4.5 7 Z" fill="#111" />
                </svg>
              </span>
              <button type="button" aria-label="Details" className="ml-1 h-2.5 w-2.5">
                <svg viewBox="0 0 10 10" className="h-2.5 w-2.5" aria-hidden="true">
                  <path d="M1 1 H6 V9 H1 Z" fill="#a3c8de" stroke="#111" />
                  <path d="M4 3 H6 V0 L10 5 L6 10 V7 H4 Z" fill="#111" />
                </svg>
              </button>
            </div>
          </section>
          <div className="min-h-0 flex-1 border-b border-[#555] bg-white p-0.5">
            <div className="grid w-fit grid-cols-4 gap-px">
              {swatches.map((s) => (
                <button key={s.name} type="button" aria-label={s.name} className="h-8 w-8 border border-[#c4c4c4]">
                  <svg viewBox="0 0 30 30" className="h-[30px] w-[30px]" aria-hidden="true">
                    <defs>
                      <linearGradient id="mirror1" x1="0" y1="0" x2="1" y2="1"><stop stopColor="#e4e4e4" /><stop offset=".45" stopColor="#b5b5b5" /><stop offset="1" stopColor="#8d8d8d" /></linearGradient>
                      <linearGradient id="mirror2" x1="0" y1="0" x2="1" y2="1"><stop stopColor="#c6c6c6" /><stop offset=".6" stopColor="#eee" /><stop offset="1" stopColor="#fff" /></linearGradient>
                      <filter id="cloud"><feGaussianBlur stdDeviation="1.8" /></filter>
                    </defs>
                    {s.art}
                  </svg>
                </button>
              ))}
            </div>
          </div>
          <div className="flex shrink-0 flex-col gap-px pt-0.5">
            {["Components", "Styles", "Shadows", "Scenes", "Instructor", "Soften Edges"].map((name) => (
              <TrayHeader key={name} title={name} />
            ))}
            <TrayHeader title="Layers" open />
            <div className="h-[3px] overflow-hidden pl-1.5">
              <svg viewBox="0 0 140 4" className="h-1 w-full" fill="none" aria-hidden="true">
                <circle cx="3" cy="5" r="3" stroke="#222" />
                <circle cx="18" cy="5" r="3" stroke="#888" />
                <path d="M135 2 l3 2" stroke="#222" strokeWidth="2" />
              </svg>
            </div>
          </div>
        </div>
        <div className="flex w-[11px] shrink-0 flex-col items-center bg-[#f1f1f1]">
          <svg viewBox="0 0 11 11" className="h-[11px] w-[11px]" aria-hidden="true"><path d="M3.5 7 L5.5 4.5 L7.5 7 Z" fill="#444" /></svg>
          <div className="h-2.5 w-2.5 rounded-xs border border-[#aaa] bg-linear-to-r from-white to-[#d5d5d5]" />
          <div className="flex-1" />
          <svg viewBox="0 0 11 11" className="h-[11px] w-[11px]" aria-hidden="true"><path d="M3.5 4 L5.5 6.5 L7.5 4 Z" fill="#444" /></svg>
        </div>
      </div>
    </aside>
  );
}

/* ---------- window ---------- */

function TitleBar() {
  return (
    <header className="relative flex h-3.5 shrink-0 items-center justify-between overflow-hidden border-b border-[#4d6878] bg-[#5a8099] pl-px">
      <svg viewBox="0 0 1013 14" preserveAspectRatio="none" className="absolute inset-0 h-full w-full" aria-hidden="true">
        <defs>
          <linearGradient id="glass">
            <stop stopColor="#a7b4c4" /><stop offset=".08" stopColor="#98a3b2" /><stop offset=".115" stopColor="#6a7889" /><stop offset=".13" stopColor="#1d2a48" />
            <stop offset=".142" stopColor="#33486a" /><stop offset=".28" stopColor="#4c6f90" /><stop offset=".4" stopColor="#527b94" /><stop offset=".46" stopColor="#6c93a8" />
            <stop offset=".6" stopColor="#557591" /><stop offset=".785" stopColor="#416089" /><stop offset=".795" stopColor="#10182a" /><stop offset=".92" stopColor="#0b0d13" />
            <stop offset=".97" stopColor="#4c545c" /><stop offset="1" stopColor="#7d868f" />
          </linearGradient>
          <filter id="soft"><feGaussianBlur stdDeviation="1.6" /></filter>
        </defs>
        <path d="M0 0 H1013 V14 H0 Z" fill="url(#glass)" />
        <g filter="url(#soft)">
          <path d="M143 2 H284 V16 H143 Z" fill="#98b9de" />
          <path d="M310 4 H341 V16 H310 Z" fill="#a3c5e4" />
          <path d="M162 10 h80" stroke="#7290b8" strokeWidth="3" />
          <path d="M258 11 h6 M271 11 h6" stroke="#3e5878" strokeWidth="3" />
          <circle cx="153" cy="11" r="4" fill="#b34555" />
          <circle cx="326" cy="12" r="4" fill="#8a4a6c" />
          <path d="M384 6 H412 V16 H384 Z" fill="#8fc7ee" />
          <ellipse cx="467" cy="12" rx="10" ry="4" fill="#9f86ad" />
          <ellipse cx="540" cy="13" rx="11" ry="4" fill="#aaa1cb" />
          <ellipse cx="615" cy="12" rx="11" ry="4" fill="#a591ba" />
          <path d="M672 5 H703 V16 H672 Z" fill="#6fb7d2" />
          <circle cx="687" cy="10" r="4" fill="#23677f" />
          <path d="M745 5 L757 7 L768 15 H747 Z M818 5 L830 7 L840 15 H820 Z" fill="#b2dcf6" />
        </g>
        <path d="M0 0 H1013" stroke="#a3b3c4" opacity=".5" />
      </svg>
      <div className="relative flex items-center gap-0.5">
        <svg viewBox="0 0 10 10" className="h-2.5 w-2.5" aria-hidden="true">
          <path d="M1 3 L6 0 L9 2 V7 L4 10 L1 8 Z" fill="#d5202b" />
          <path d="M2 4 L6 2 L8 3 M2 6.5 L5 8 L8 6" stroke="#fff" fill="none" />
        </svg>
        <h1 className="text-[7px] leading-3 whitespace-nowrap text-black">Untitled - SketchUp Pro 2016</h1>
      </div>
      <div className="relative mr-[3px] flex h-[11px] self-start overflow-hidden rounded-b-sm border border-t-0 border-[#8d949b]">
        <button type="button" aria-label="Minimize" className="flex w-[18px] items-center justify-center border-r border-[#777] bg-linear-to-b from-[#a4acb3] to-[#4f5963]">
          <svg viewBox="0 0 8 6" className="h-1.5 w-2" aria-hidden="true"><path d="M1 3 H7 V5 H1 Z" fill="#fff" /></svg>
        </button>
        <button type="button" aria-label="Restore" className="flex w-4 items-center justify-center border-r border-[#777] bg-linear-to-b from-[#a4acb3] to-[#4f5963]">
          <svg viewBox="0 0 8 8" className="h-2 w-2" fill="none" stroke="#fff" aria-hidden="true"><path d="M1 3 H5.5 V7 H1 Z M3 2.5 V1 H7.5 V5 H6" strokeWidth="1.1" /></svg>
        </button>
        <button type="button" aria-label="Close" className="flex w-[30px] items-center justify-center bg-linear-to-b from-[#dc8b7d] via-[#c23a22] to-[#d25b3b]">
          <svg viewBox="0 0 6 6" className="h-1.5 w-1.5" stroke="#fff" strokeWidth="1.5" aria-hidden="true"><path d="M.5 .5 L5.5 5.5 M5.5 .5 L.5 5.5" /></svg>
        </button>
      </div>
    </header>
  );
}

const sliderBase =
  "h-[9px] w-full appearance-none outline-none [&::-webkit-slider-thumb]:h-[9px] [&::-webkit-slider-thumb]:w-1 [&::-webkit-slider-thumb]:appearance-none [&::-webkit-slider-thumb]:border-x [&::-webkit-slider-thumb]:border-[#999] [&::-webkit-slider-thumb]:bg-white";

function ShadowSliders() {
  return (
    <div className="flex w-[203px] shrink-0 gap-2.5 pr-[7px] pl-0.5 text-[6px] leading-[7px] font-bold text-[#222]">
      <div className="flex-1">
        <input
          type="range"
          aria-label="Date"
          defaultValue={87}
          className={`${sliderBase} bg-[linear-gradient(to_right,#fff,#f3c94b_25%,#ef8b28_45%,#d8271f_65%,#d8271f_84%,#f4d5d5_88%,#fff)] bg-size-[100%_4px] bg-no-repeat`}
        />
        <div className="flex justify-between font-['Liberation_Sans',sans-serif]">
          {"JFMAMJJASOND".split("").map((m, i) => (
            <span key={i}>{m}</span>
          ))}
        </div>
      </div>
      <div className="flex-1">
        <input
          type="range"
          aria-label="Time"
          defaultValue={69}
          className={`${sliderBase} bg-[linear-gradient(to_right,#fff,#a3b8dc_35%,#5f70d8_60%,#3a46a8_72%,#111638)] bg-size-[100%_4px] bg-no-repeat`}
        />
        <div className="flex justify-between font-['Liberation_Sans',sans-serif]">
          <span>06:43 AM</span>
          <span>Noon</span>
          <span>04:45 PM</span>
        </div>
      </div>
    </div>
  );
}

const bar = "flex shrink-0 items-center gap-px border-r border-b border-[#c3c3c3] bg-[#f4f4f4]";

export default function App() {
  return (
    <div className="flex min-h-screen flex-col overflow-hidden bg-[#f0f0f0] font-['Open_Sans','Noto_Sans',sans-serif] text-[#1a1a1a]">
      <TitleBar />
      <nav className="flex h-3 shrink-0 items-center gap-[9px] bg-linear-to-b from-white via-[#e9edf7] to-[#d7ddef] pl-1 text-[7px] leading-3">
        {["File", "Edit", "View", "Camera", "Draw", "Tools", "Window", "Extensions", "Help"].map((m) => (
          <button key={m} type="button">{m}</button>
        ))}
      </nav>

      <div className="flex h-[25px] shrink-0">
        <div className={`${bar} pl-0.5`}>
          <Grip />
          <Group items={fileTools} width="w-[66px]" />
          <Sep />
          <Group items={editTools} width="w-[88px]" />
          <Sep />
          <Group items={undoTools} width="w-[45px]" />
          <Sep />
          <Group items={printTools} width="w-6" />
          <Sep />
          <Group items={infoTools} width="w-6" />
        </div>
        <div className={bar}>
          <Grip />
          <Group items={shadowTools} width="w-6" />
          <ShadowSliders />
        </div>
        <div className={bar}>
          <Grip />
          <Group items={renderTools} width="w-[66px]" />
          <Sep />
          <div className="w-px" />
          <Group items={frameTools} width="w-[66px]" />
        </div>
        <div className={`${bar} pr-0.5 pl-px`}>
          <Grip />
          <Group items={lightTools} width="w-[172px]" />
        </div>
        <div className={bar}>
          <Grip />
          <Group items={proxyTools} width="w-[108px]" />
        </div>
      </div>

      <div className="flex h-6 shrink-0">
        <div className={`${bar} pl-[3px]`}>
          <Grip />
          <Group items={shapeTools} width="w-[839px]" />
        </div>
        <div className={`${bar} pr-0.5`}>
          <Grip />
          <span className="relative ml-1 flex h-3.5 w-[92px] items-center bg-white pl-1">
            <svg viewBox="0 0 6 6" className="h-1.5 w-1.5" fill="none" stroke="#222" aria-hidden="true"><path d="M.5 3 L2 5 L5.5 1" /></svg>
            <select aria-label="Active layer" className="h-full flex-1 appearance-none bg-transparent pl-[5px] text-[7px] outline-none">
              <option>Layer0</option>
            </select>
            <svg viewBox="0 0 9 13" className="pointer-events-none absolute top-0 right-0 h-[13px] w-[9px]" aria-hidden="true">
              <path d="M.5 .5 H8.5 V12.5 H.5 Z" fill="#e5e5e5" stroke="#777" />
              <path d="M2 5 H7 L4.5 8 Z" fill="#111" />
            </svg>
          </span>
        </div>
      </div>

      <main className="flex min-h-0 flex-1">
        <div className="flex w-[46px] shrink-0 flex-col bg-[#f4f4f4] pt-1 pl-px">
          <div className="mb-px w-[41px] border-t border-dotted border-[#999]" />
          {leftGroups.map((group, i) => (
            <div key={i} className={i ? "mt-0.5 w-[43px] border-t border-[#a5a5a5] pt-0.5" : "w-[43px]"}>
              <div className={`grid auto-rows-fr grid-cols-2 items-center ${group.height}`}>
                {group.items.map((item) => (
                  <ToolButton key={item.label} item={item} />
                ))}
              </div>
            </div>
          ))}
          <div className="border-t border-[#bbb]" />
        </div>
        <section aria-label="Top view" className="relative min-w-0 flex-1 border-t border-l border-[#6f776d] bg-[#9bbc93]">
          <span className="absolute top-0 left-0.5 text-[8px] leading-3">Top</span>
          <svg viewBox="0 0 801 426" preserveAspectRatio="none" className="absolute inset-0 h-full w-full" aria-hidden="true">
            <path d="M185 110.5 H616.5 V255 H474.5 V315 H327 V255 H185 Z" fill="#c6d7e2" stroke="#111" strokeWidth="1.3" />
            <path d="M1 339 L263 256" stroke="#56708c" strokeWidth="1" strokeDasharray="1 1.5" />
          </svg>
        </section>
        <DefaultTray />
      </main>

      <div className="flex h-[25px] shrink-0 pt-px">
        <div className={`${bar} pl-0.5`}>
          <Grip />
          <label htmlFor="measure" className="w-[60px] pl-[3px] text-[7px]">Measurements</label>
          <input id="measure" className="h-4 w-[121px] bg-transparent text-[7px] outline-none" />
        </div>
        <div className={bar}>
          <Grip />
          <Group items={geoTools} width="w-[67px]" />
        </div>
        <div className={`${bar} pl-px`}>
          <Grip />
          <Group items={sectionTools} width="w-[67px]" />
        </div>
        <div className={bar}>
          <Grip />
          <Group items={viewTools} width="w-[129px]" />
        </div>
        <div className={bar}>
          <Grip />
          <div className="w-px" />
          <Group items={xrayTools} width="w-11" />
          <Sep />
          <div className="w-px" />
          <Group items={styleTools} width="w-[108px]" />
        </div>
      </div>

      <footer className="flex h-[17px] shrink-0 items-center pl-[3px]">
        <svg viewBox="0 0 50 12" className="h-3 w-[50px]" fill="none" aria-hidden="true">
          <circle cx="5" cy="6" r="4" stroke="#aaa" />
          <path d="M5 4 v4 M4 5 h2" stroke="#999" strokeWidth="1.3" />
          <circle cx="24" cy="6" r="4" stroke="#222" strokeWidth="1.2" />
          <path d="M24 3.5 v5 M23 5 h2" stroke="#222" strokeWidth="1.3" />
          <circle cx="43" cy="6" r="4.5" stroke="#aaa" fill="#ddd" />
          <circle cx="43" cy="5" r="1.7" fill="#888" />
          <path d="M40 9 q3-3 6 0 Z" fill="#888" />
        </svg>
        <div className="mr-1.5 ml-[5px] h-1.5 w-px bg-[#999]" />
        <p className="text-[8px] leading-3">Select objects. Shift to extend select. Drag mouse to select multiple.</p>
      </footer>
    </div>
  );
}
